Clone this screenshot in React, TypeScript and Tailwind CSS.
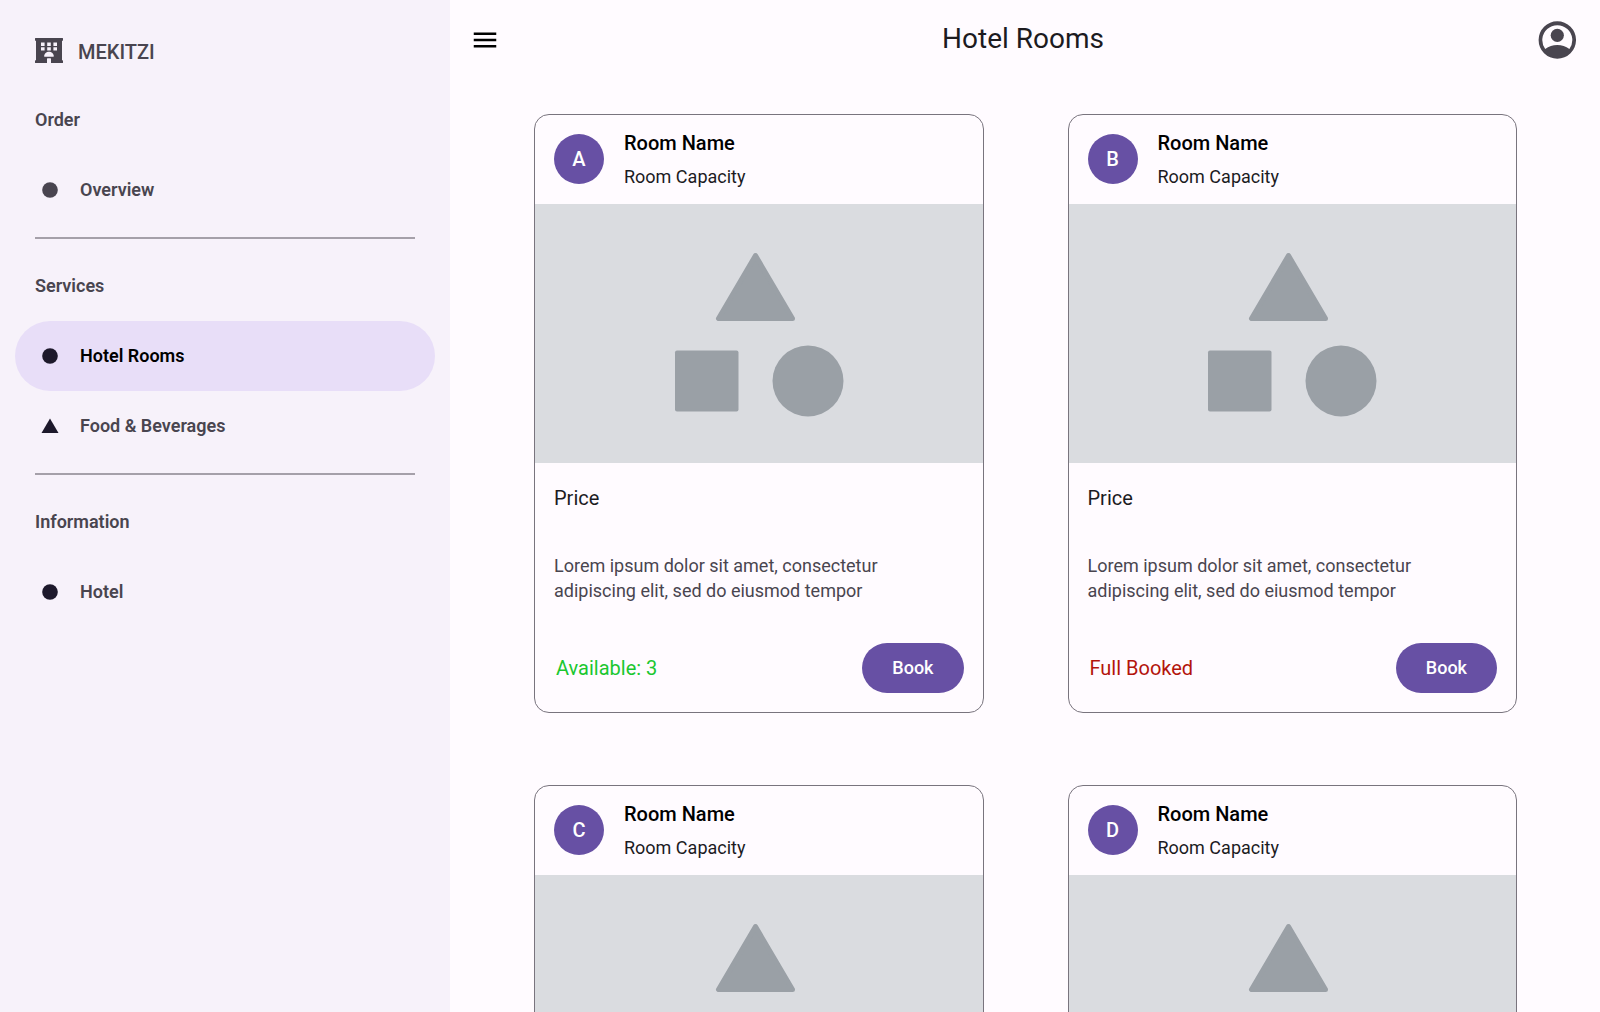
import { MdMenu } from "react-icons/md";

type Shape = "circle" | "triangle";
type NavItem = { label: string; shape: Shape; active?: boolean; muted?: boolean };
type NavSection = { title: string; items: NavItem[] };
type Room = { letter: string; available: number };

const sections: NavSection[] = [
  { title: "Order", items: [{ label: "Overview", shape: "circle", muted: true }] },
  {
    title: "Services",
    items: [
      { label: "Hotel Rooms", shape: "circle", active: true },
      { label: "Food & Beverages", shape: "triangle" },
    ],
  },
  { title: "Information", items: [{ label: "Hotel", shape: "circle" }] },
];

const rooms: Room[] = [
  { letter: "A", available: 3 },
  { letter: "B", available: 0 },
  { letter: "C", available: 3 },
  { letter: "D", available: 0 },
];

function HotelLogo() {
  return (
    <svg viewBox="0 0 28 25" className="h-[25px] w-7" fill="currentColor" aria-hidden="true">
      <path
        fillRule="evenodd"
        d="M.5 0h27a.5.5 0 0 1 .5.5v1.700a.5.5 0 0 1-.5.5H27V22.300h.5a.5.5 0 0 1 .5.5v1.700a.5.5 0 0 1-.5.5H16v-4.200a.6.6 0 0 0-.6-.6h-2.800a.6.6 0 0 0-.6.6V25H.5a.5.5 0 0 1-.5-.5v-1.700a.5.5 0 0 1 .5-.5H1V2.700H.5a.5.5 0 0 1-.5-.5V.5A.5.5 0 0 1 .5 0zM6 4.500V8h3.600V4.500zM12.200 4.500V8h3.600V4.500zM18.400 4.500V8H22V4.500zM6 9.200v3.400h3.600V9.200zM12.200 9.200v3.400h3.600V9.200zM18.400 9.200v3.400H22V9.200zM9.200 18.300c0-2.600 2.200-4.500 4.800-4.500s4.800 1.900 4.800 4.500c0 .3-.2.5-.5.5H9.700a.5.5 0 0 1-.5-.5z"
      />
    </svg>
  );
}

function NavShape({ shape, muted }: { shape: Shape; muted?: boolean }) {
  return (
    <svg
      viewBox="0 0 30 30"
      aria-hidden="true"
      className={muted ? "size-[30px] shrink-0 text-[#49454f]" : "size-[30px] shrink-0 text-[#1d192b]"}
      fill="currentColor"
    >
      {shape === "circle" ? <circle cx="15" cy="15" r="7.8" /> : <path d="M15 7.6 23.5 22h-17z" />}
    </svg>
  );
}

function Sidebar() {
  return (
    <aside className="w-[450px] shrink-0 bg-[#f7f2fa] p-[15px] text-[#49454f]">
      <div className="flex h-[70px] items-center gap-[15px] px-5">
        <HotelLogo />
        <span className="pt-1 text-xl font-medium">MEKITZI</span>
      </div>
      <nav>
        {sections.map((section, i) => (
          <section key={section.title}>
            {i > 0 && <hr className="mx-5 my-3 border-t-2 border-[#a5a0a9]" />}
            <h2 className="flex h-[70px] items-center px-5 text-lg font-semibold">{section.title}</h2>
            <ul>
              {section.items.map((item) => (
                <li key={item.label}>
                  <a
                    href="#"
                    aria-current={item.active ? "page" : undefined}
                    className={
                      item.active
                        ? "flex h-[70px] items-center gap-[15px] rounded-full bg-[#e8def8] px-5 text-lg font-semibold text-black"
                        : "flex h-[70px] items-center gap-[15px] rounded-full px-5 text-lg font-semibold"
                    }
                  >
                    <NavShape shape={item.shape} muted={item.muted} />
                    {item.label}
                  </a>
                </li>
              ))}
            </ul>
          </section>
        ))}
      </nav>
    </aside>
  );
}

function AccountIcon() {
  return (
    <svg viewBox="0 0 38 38" className="size-[38px]" fill="#49454f" aria-hidden="true">
      <path
        fillRule="evenodd"
        d="M19.300.3a18.700 18.700 0 1 1 0 37.400 18.700 18.700 0 0 1 0-37.400zM7.200 28C10.800 25.300 14.800 24 19.300 24s8.500 1.300 12.100 4A15 15 0 1 0 7.200 28z"
      />
      <circle cx="19.300" cy="14.300" r="6.600" />
    </svg>
  );
}

function Placeholder() {
  return (
    <div className="flex h-[259px] items-center justify-center bg-[#dadce0]">
      <svg
        viewBox="0 0 168 164"
        className="h-[164px] w-[168px] overflow-visible"
        fill="#9aa0a6"
        aria-hidden="true"
      >
        <path
          d="M80.500 3.500 43.500 66.500h74z"
          stroke="#9aa0a6"
          strokeWidth="5"
          strokeLinejoin="round"
        />
        <rect x="0" y="98.500" width="63.500" height="61" rx="2" />
        <circle cx="133" cy="129" r="35.500" />
      </svg>
    </div>
  );
}

function RoomCard({ room }: { room: Room }) {
  return (
    <article className="overflow-hidden rounded-[15px] border border-[#79747e]">
      <header className="flex h-[89px] items-center gap-5 px-[19px] pb-0.5">
        <div className="flex size-[50px] items-center justify-center rounded-full bg-[#6750a4] text-xl font-medium text-white">
          {room.letter}
        </div>
        <div>
          <h2 className="text-xl leading-[30px] font-medium text-black">Room Name</h2>
          <p className="pt-1.5 text-lg leading-[25px] text-[#1c1b1f]">Room Capacity</p>
        </div>
      </header>
      <Placeholder />
      <div className="px-[19px] pt-5 pb-[19px]">
        <h3 className="text-xl leading-[30px] text-[#1c1b1f]">Price</h3>
        <p className="mt-10 max-w-[350px] text-lg leading-[25px] text-[#49454f]">
          Lorem ipsum dolor sit amet, consectetur adipiscing elit, sed do eiusmod tempor
        </p>
        <div className="mt-10 flex items-center justify-between pl-0.5">
          {room.available > 0 ? (
            <span className="text-xl text-[#1bc730]">Available: {room.available}</span>
          ) : (
            <span className="text-xl text-[#b3140c]">Full Booked</span>
          )}
          <button
            type="button"
            className="h-[50px] rounded-full bg-[#6750a4] px-[30px] text-lg font-medium text-white"
          >
            Book
          </button>
        </div>
      </div>
    </article>
  );
}

export default function App() {
  return (
    <div className="flex h-screen overflow-hidden bg-[#fffbff] font-[Roboto,sans-serif]">
      <Sidebar />
      <main className="flex min-w-0 flex-1 flex-col">
        <header className="flex h-20 shrink-0 items-center justify-between pr-6 pl-5">
          <button
            type="button"
            aria-label="Open menu"
            className="flex h-[38px] w-[30px] items-center justify-center text-black"
          >
            <MdMenu className="size-[30px]" />
          </button>
          <h1 className="flex-1 pb-0.5 pl-2 text-center text-[28px] leading-9 text-[#1c1b1f]">
            Hotel Rooms
          </h1>
          <button type="button" aria-label="Account">
            <AccountIcon />
          </button>
        </header>
        <div className="min-h-0 flex-1 overflow-y-auto [scrollbar-width:none]">
          <div className="grid grid-cols-2 gap-x-[84px] gap-y-[72px] pt-[34px] pr-[83px] pb-[72px] pl-[84px]">
            {rooms.map((room) => (
              <RoomCard key={room.letter} room={room} />
            ))}
          </div>
        </div>
      </main>
    </div>
  );
}
